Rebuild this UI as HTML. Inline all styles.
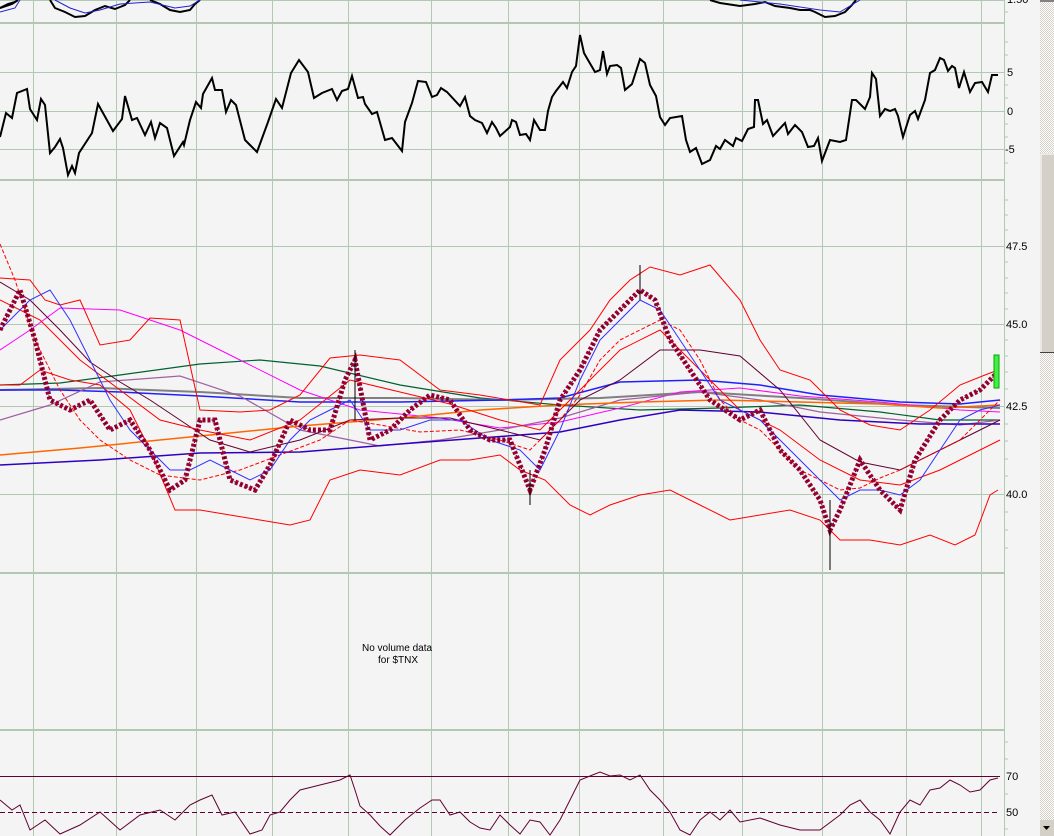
<!DOCTYPE html>
<html><head><style>
html,body{margin:0;padding:0;background:#fff;width:1054px;height:836px;overflow:hidden;font-family:"Liberation Sans",sans-serif}
svg{position:absolute;left:0;top:0}
text{font-family:"Liberation Sans",sans-serif;font-size:11px;fill:#000}
</style></head><body>
<svg width="1054" height="836" viewBox="0 0 1054 836">
<defs><pattern id="chk" width="2" height="2" patternUnits="userSpaceOnUse"><rect width="2" height="2" fill="#fff"/><rect width="1" height="1" fill="#d4d0c8"/><rect x="1" y="1" width="1" height="1" fill="#d4d0c8"/></pattern></defs>
<rect x="0" y="0" width="1040" height="836" fill="#f4f4f4"/>
<rect x="1004" y="0" width="36" height="836" fill="#f4f4f4"/>
<!-- vertical grid -->
<g stroke="#b2c8b2" stroke-width="1">
<line x1="33.5" y1="0" x2="33.5" y2="836"/><line x1="116.5" y1="0" x2="116.5" y2="836"/>
<line x1="196.5" y1="0" x2="196.5" y2="836"/><line x1="272.5" y1="0" x2="272.5" y2="836"/>
<line x1="348.5" y1="0" x2="348.5" y2="836"/><line x1="431.5" y1="0" x2="431.5" y2="836"/>
<line x1="508.5" y1="0" x2="508.5" y2="836"/><line x1="579.5" y1="0" x2="579.5" y2="836"/>
<line x1="663.5" y1="0" x2="663.5" y2="836"/><line x1="742.5" y1="0" x2="742.5" y2="836"/>
<line x1="822.5" y1="0" x2="822.5" y2="836"/><line x1="906.5" y1="0" x2="906.5" y2="836"/>
<line x1="981.5" y1="0" x2="981.5" y2="836"/>
<line x1="0" y1="0.5" x2="1004" y2="0.5"/>
<line x1="0" y1="72.5" x2="1004" y2="72.5"/><line x1="0" y1="111.5" x2="1004" y2="111.5"/><line x1="0" y1="149.5" x2="1004" y2="149.5"/>
<line x1="0" y1="246.5" x2="1004" y2="246.5"/><line x1="0" y1="324.5" x2="1004" y2="324.5"/>
<line x1="0" y1="406.5" x2="1004" y2="406.5"/><line x1="0" y1="494.5" x2="1004" y2="494.5"/>
<line x1="1004.5" y1="0" x2="1004.5" y2="836"/>
</g>
<g fill="#b2c8b2">
<rect x="0" y="22" width="1004" height="2"/><rect x="0" y="179" width="1004" height="2"/>
<rect x="0" y="572" width="1004" height="2"/><rect x="0" y="729" width="1004" height="2"/>
</g>
<!-- ticks -->
<g stroke="#b2c8b2"><path d="M1004 12h4M1004 42h4M1004 55h4M1004 85h4M1004 98h4M1004 124h4M1004 137h4M1004 163h4M1004 200h4M1004 215h4M1004 230h4M1004 262h4M1004 278h4M1004 293h4M1004 309h4M1004 340h4M1004 356h4M1004 372h4M1004 389h4M1004 424h4M1004 441h4M1004 459h4M1004 476h4M1004 512h4M1004 530h4M1004 548h4M1004 742h4M1004 759h4M1004 794h4M1004 829h4"/></g>
<!-- top panel -->
<polyline fill="none" stroke="#000" stroke-width="2" points="0,8 8,4 15,2 18,0 M"/>
<path fill="none" stroke="#000" stroke-width="2" d="M0,8 L12,4 18,0 M50,0 L55,8 65,12 75,17 85,16 95,10 105,6 115,9 125,5 130,0 M150,0 L160,4 170,10 180,12 190,10 195,4 200,0 M710,0 L720,3 740,6 755,4 765,2 775,6 790,8 800,10 810,10 815,12 825,17 835,16 845,12 852,5 856,0"/>
<path fill="none" stroke="#2020d0" stroke-width="1" d="M0,12 L15,8 20,0 M55,0 L70,8 85,13 100,10 120,4 150,2 175,8 190,6 200,0 M740,0 L780,4 820,10 840,12 860,0"/>
<!-- momentum -->
<polyline fill="none" stroke="#000" stroke-width="2" points="0,137 6,113 12,118 17,93 27,89 30,109 37,120 41,99 45,105 50,153 55,147 60,139 63,148 68,175 72,166 75,173 79,153 92,133 98,104 113,131 122,119 125,96 132,120 137,118 145,135 151,122 155,138 160,123 167,128 174,156 183,142 184,145 190,120 196,102 201,108 203,94 212,78 215,90 222,90 226,112 231,100 236,105 245,140 250,145 257,152 268,122 276,99 282,108 291,73 299,60 308,72 314,98 322,93 332,89 337,100 342,91 348,89 352,76 358,98 363,97 365,104 372,114 377,112 385,140 392,138 402,151 405,122 412,103 418,81 426,82 432,97 437,95 441,88 447,92 460,106 465,97 470,116 475,120 482,123 487,133 492,122 496,128 500,136 510,127 512,120 516,122 520,135 526,134 530,140 534,120 540,130 545,130 548,111 552,97 556,91 563,82 567,88 572,72 576,66 580,35 584,53 588,60 595,72 600,70 603,51 607,74 610,66 617,65 621,68 625,90 632,84 640,59 645,63 650,85 656,96 660,117 665,125 670,118 682,116 686,140 690,152 696,148 702,164 710,160 716,146 720,149 725,140 733,146 736,138 742,141 748,129 754,127 755,100 758,100 763,124 767,120 773,136 785,123 788,134 795,125 802,132 808,147 814,146 818,138 822,161 830,140 840,142 846,140 852,100 856,100 865,109 870,97 872,73 876,79 880,116 885,109 890,111 895,109 898,116 903,137 910,115 915,111 918,119 925,100 930,73 935,70 940,58 944,60 948,71 952,66 955,68 959,88 964,72 970,92 975,83 982,82 988,92 992,75 998,75"/>
<!-- main panel MAs -->
<polyline fill="none" stroke="#006030" stroke-width="1.2" points="0,385 60,383 120,375 200,364 260,360 320,366 400,385 480,398 560,405 640,410 720,408 800,405 880,412 940,420 1000,420"/>
<polyline fill="none" stroke="#808080" stroke-width="2" points="0,390 100,388 200,392 300,398 400,398 500,400 600,398 700,392 800,398 900,405 1000,408"/>
<polyline fill="none" stroke="#2020ff" stroke-width="1.5" points="0,390 60,390 120,392 200,396 300,402 400,402 500,400 560,398 620,382 700,380 760,385 820,395 900,402 960,404 1000,400"/>
<polyline fill="none" stroke="#ff00ff" stroke-width="1" points="0,350 30,330 60,308 120,310 180,330 240,360 300,390 360,410 440,418 500,428 560,422 620,408 680,392 740,388 800,396 880,402 960,410 1000,412"/>
<polyline fill="none" stroke="#a060a0" stroke-width="1.2" points="0,420 50,405 100,382 180,376 240,396 300,430 380,446 440,440 500,430 560,418 620,400 700,392 760,400 820,412 900,420 960,425 1000,420"/>
<polyline fill="none" stroke="#ff6600" stroke-width="1.5" points="0,455 80,448 200,436 300,426 400,418 480,410 560,405 640,402 720,400 800,402 880,404 940,408 1000,405"/>
<polyline fill="none" stroke="#3000c0" stroke-width="1.5" points="0,465 100,460 200,453 300,452 400,444 480,438 560,432 620,420 680,410 760,412 840,420 920,424 1000,424"/>
<polyline fill="none" stroke="#600030" stroke-width="1" points="0,282 30,300 60,330 90,362 120,382 150,400 180,420 210,440 250,452 300,440 350,420 400,418 450,418 500,430 540,440 580,400 620,380 660,350 700,350 740,356 780,390 820,440 860,462 900,470 940,450 980,430 1000,420"/>
<polyline fill="none" stroke="#ff0000" stroke-width="1" points="0,244 15,280 35,340 60,390 80,420 100,440 130,460 160,475 200,480 240,470 280,455 320,440 350,420 380,425 420,432 460,430 500,440 530,450 560,420 580,395 600,360 620,340 640,330 660,320 680,330 700,360 720,400 740,420 760,430 780,450 800,470 820,480 840,490 860,488 880,478 900,470 920,460 940,450 960,440 980,420 1000,400" stroke-dasharray="4 2"/>
<polyline fill="none" stroke="#ff0000" stroke-width="1" points="0,278 30,280 45,300 60,305 80,300 100,345 130,340 150,318 180,320 200,410 240,412 270,410 300,395 330,358 360,355 400,360 440,390 480,395 510,400 540,405 560,360 590,330 610,300 630,280 650,267 680,275 710,265 740,300 760,340 780,370 810,380 840,410 870,425 900,430 930,410 960,385 985,375 998,370"/>
<polyline fill="none" stroke="#ff0000" stroke-width="1" points="0,385 20,385 40,370 70,380 100,385 130,410 150,450 175,510 200,510 230,515 260,520 290,525 310,520 330,480 360,470 400,475 440,460 470,460 500,455 520,470 545,480 570,505 590,515 610,505 640,495 670,490 700,505 730,520 760,515 790,510 820,520 840,540 870,540 900,545 930,535 955,545 975,535 990,495 998,490"/>
<polyline fill="none" stroke="#ff0000" stroke-width="1" points="0,300 40,320 80,360 120,390 160,420 200,430 250,440 300,420 350,380 400,392 450,404 500,420 540,430 580,390 620,350 660,330 700,370 740,410 780,430 820,460 860,480 900,485 940,470 980,450 1000,440"/>
<polyline fill="none" stroke="#3030ff" stroke-width="1" points="0,330 30,300 50,290 70,320 90,360 110,400 130,430 150,450 170,470 190,470 210,460 230,470 250,480 270,470 290,440 310,420 330,410 350,400 370,430 400,430 430,420 460,420 490,440 520,450 540,470 560,430 580,380 600,340 620,320 640,300 660,310 680,340 700,370 720,400 740,410 760,420 780,440 800,460 820,480 840,500 860,490 880,490 900,495 920,480 940,450 960,420 980,410 1000,405"/>
<!-- price candles approx -->
<polyline fill="none" stroke="#990033" stroke-width="5" points="0,330 20,290 35,340 50,400 70,410 90,400 110,430 130,420 150,450 170,490 185,480 200,420 215,420 230,480 255,490 270,465 290,420 310,430 330,430 345,380 355,360 370,440 390,430 410,410 430,395 450,400 470,430 490,440 510,440 530,490 545,450 560,400 580,370 600,330 620,310 640,290 655,300 670,340 690,370 710,400 740,420 760,410 780,450 800,470 820,500 830,530 840,510 860,460 880,490 900,510 915,460 940,420 960,400 980,390 995,375" stroke-dasharray="3 2"/>
<polyline fill="none" stroke="#000" stroke-width="1" points="0,330 20,290 35,340 50,400 70,410 90,400 110,430 130,420 150,450 170,490 185,480 200,420 215,420 230,480 255,490 270,465 290,420 310,430 330,430 345,380 355,360 370,440 390,430 410,410 430,395 450,400 470,430 490,440 510,440 530,490 545,450 560,400 580,370 600,330 620,310 640,290 655,300 670,340 690,370 710,400 740,420 760,410 780,450 800,470 820,500 830,530 840,510 860,460 880,490 900,510 915,460 940,420 960,400 980,390 995,375" stroke-dasharray="1 6"/>
<path stroke="#000" stroke-width="1" d="M830,500V570M530,470V505M640,265V300M355,350V420"/>
<rect x="994" y="355" width="5" height="33" fill="#44ee44" stroke="#00aa00"/>
<text x="362" y="651" style="font-size:10px">No volume data</text>
<text x="378" y="663" style="font-size:10px">for $TNX</text>
<!-- RSI -->
<line x1="0" y1="776.5" x2="1000" y2="776.5" stroke="#600030" stroke-width="1"/>
<line x1="0" y1="812.5" x2="1000" y2="812.5" stroke="#600030" stroke-width="1" stroke-dasharray="5 3"/>
<polyline fill="none" stroke="#600030" stroke-width="1" points="0,800 12,810 20,805 30,830 45,820 60,834 80,825 100,812 120,830 140,815 160,810 175,820 190,805 200,800 212,795 222,815 235,812 250,834 262,830 270,815 280,812 290,800 300,790 320,785 340,780 350,775 355,790 360,806 370,815 380,826 390,835 405,820 420,808 432,800 440,800 450,815 460,812 470,822 480,828 490,830 500,815 510,825 520,834 530,820 540,822 550,835 560,820 570,800 580,780 590,776 600,772 610,776 620,775 630,780 640,775 650,790 660,800 670,812 680,830 690,835 700,820 710,812 720,820 730,810 740,822 760,818 780,825 800,830 820,830 840,815 850,805 860,800 870,812 880,820 890,834 900,812 910,800 920,805 930,790 940,788 950,780 960,785 970,792 980,790 990,780 998,778"/>
<!-- labels -->
<text x="1007" y="3">1.50</text>
<text x="1007" y="76">5</text><text x="1007" y="115">0</text><text x="1005" y="153">-5</text>
<text x="1006" y="250">47.5</text><text x="1006" y="328">45.0</text><text x="1006" y="410">42.5</text><text x="1006" y="498">40.0</text>
<text x="1006" y="780">70</text><text x="1006" y="816">50</text>
<!-- scrollbar -->
<rect x="1040" y="0" width="14" height="836" fill="url(#chk)"/>
<rect x="1040" y="0" width="14" height="2" fill="#808080"/>
<rect x="1040" y="153" width="14" height="200" fill="#d4d0c8"/>
<path d="M1041 353V154H1054" fill="none" stroke="#fff"/>
<line x1="1040" y1="352.5" x2="1054" y2="352.5" stroke="#404040"/>
<rect x="1040" y="820" width="14" height="16" fill="#d4d0c8"/>
<path d="M1043 826h7l-3.5 4z" fill="#000"/>
</svg>
</body></html>
